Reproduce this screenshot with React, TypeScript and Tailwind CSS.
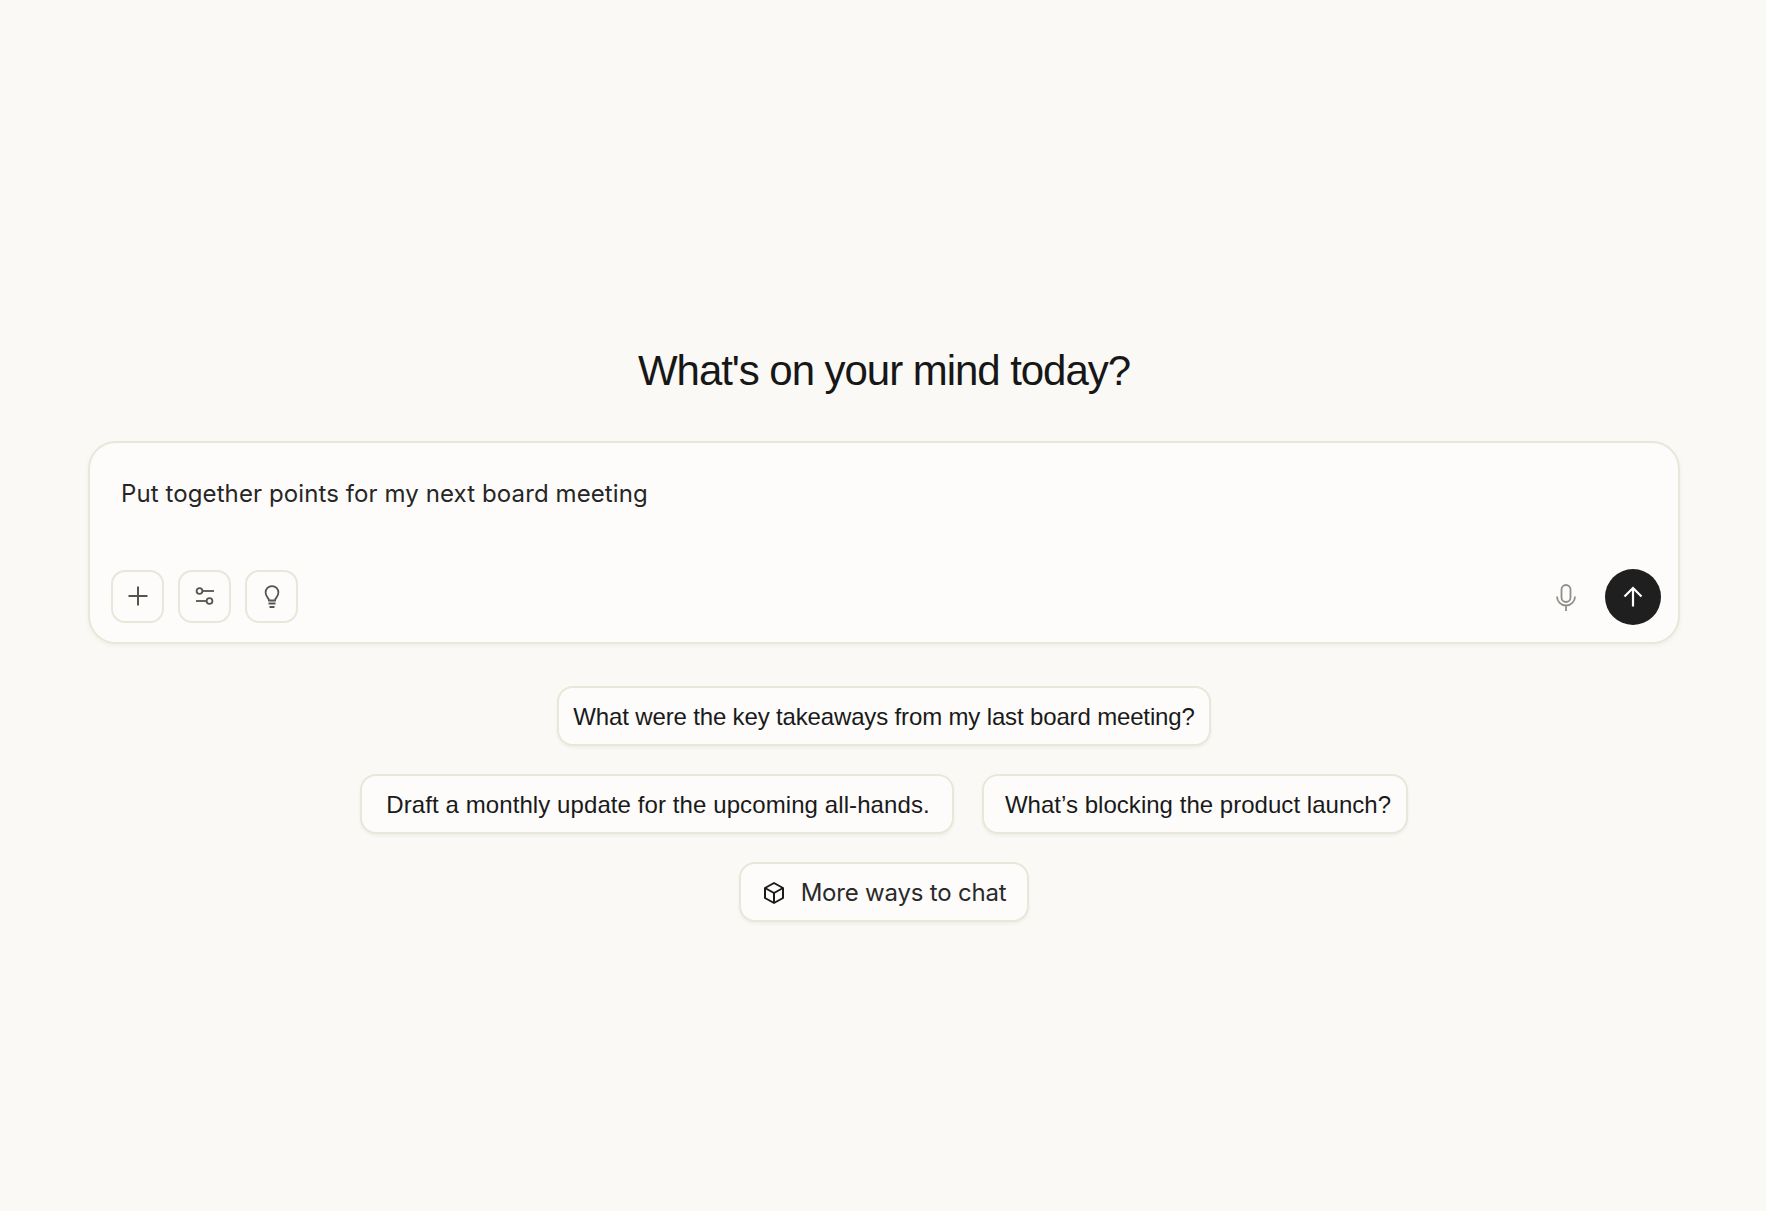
import React from "react";

const iconBtn = "w-[53px] h-[53px] rounded-[14px] border-2 border-[#e8e7da] flex items-center justify-center text-[#55554f]";
const chip = "h-[60px] pt-[1px] rounded-[16px] border-2 border-[#e8e7da] bg-[#fdfcfa] shadow-[0_2px_3px_rgba(60,60,30,0.06)] flex items-center justify-center text-[24px] text-[#1a1a1a]";
const grotesk = "font-['Liberation_Sans',sans-serif]";

export default function App() {
  return (
    <div className="min-h-[1211px] bg-[#faf9f5] flex flex-col items-center pt-[340px] pl-[2px] font-['Inter','Liberation_Sans',sans-serif]">
      <h1 className="h-[60px] flex items-center text-[42px] font-normal text-[#171717] font-['Liberation_Sans',sans-serif] tracking-[-1.05px]">What's on your mind today?</h1>
      <div className="mt-[41px] w-[1592px] h-[203px] rounded-[28px] border-2 border-[#e8e7da] bg-[#fdfcfa] shadow-[0_2px_4px_rgba(60,60,30,0.06)] flex flex-col justify-between pl-[21px] pr-[17px] pt-[33px] pb-[17px]">
        <div className="pl-[10px] h-[36px] flex items-center text-[24px] text-[#262626] tracking-[0.1px]">Put together points for my next board meeting</div>
        <div className="flex items-center justify-between">
          <div className="flex items-center gap-[14px] mb-[2px]">
            <button className={iconBtn}>
              <svg width="22" height="22" viewBox="0 0 22 22" fill="none" stroke="currentColor" strokeWidth="2"><path d="M11 1.500v19M1.500 11h19" /></svg>
            </button>
            <button className={iconBtn}>
              <svg width="22" height="22" viewBox="0 0 22 22" fill="none" stroke="currentColor" strokeWidth="1.8"><circle cx="5.500" cy="6" r="2.900" /><path d="M8.500 6h11.500" /><circle cx="15.500" cy="16" r="2.900" /><path d="M2 16h10.500" /></svg>
            </button>
            <button className={iconBtn}>
              <svg width="22" height="26" viewBox="0 0 22 26" fill="none" stroke="currentColor" strokeWidth="1.8"><path d="M8 17.500c0-2.600-3.400-3.600-3.400-8a6.400 6.400 0 0 1 12.800 0c0 4.400-3.400 5.400-3.400 8z" /><path d="M7.500 20.500h7M8.500 24h5" /></svg>
            </button>
          </div>
          <div className="flex items-center gap-[28px]">
            <svg width="22" height="27" viewBox="0 0 22 27" fill="none" stroke="#8e8e8a" strokeWidth="1.8"><rect x="6.500" y="1" width="9" height="17" rx="4.500" /><path d="M2 12.500a9 9 0 0 0 18 0M11 21.500V27" /></svg>
            <button className="w-[56px] h-[56px] rounded-full bg-[#1f1f1f] flex items-center justify-center">
              <svg width="22" height="22" viewBox="0 0 22 22" fill="none" stroke="#fff" strokeWidth="2.200"><path d="M11 20.500V2M2.500 10.500L11 2l8.500 8.500" /></svg>
            </button>
          </div>
        </div>
      </div>
      <div className="mt-[42px] flex flex-col items-center gap-[28px]">
        <button className={`${chip} ${grotesk} w-[654px] tracking-[-0.15px]`}>What were the key takeaways from my last board meeting?</button>
        <div className="flex gap-[28px]">
          <button className={`${chip} ${grotesk} w-[594px] pl-[2px] tracking-[0.09px]`}>Draft a monthly update for the upcoming all-hands.</button>
          <button className={`${chip} ${grotesk} w-[426px] pl-[6px] tracking-[0.03px]`}>What’s blocking the product launch?</button>
        </div>
        <button className={`${chip} w-[290px] gap-[15px] text-[#2a2a2a] tracking-[-0.2px]`}>
          <svg width="24" height="24" viewBox="0 0 24 24" fill="none" stroke="#1a1a1a" strokeWidth="2" strokeLinejoin="round"><path d="M12 2l9 5v10l-9 5-9-5V7z" /><path d="M3 7l9 5 9-5M12 12v10" /></svg>
          More ways to chat
        </button>
      </div>
    </div>
  );
}
